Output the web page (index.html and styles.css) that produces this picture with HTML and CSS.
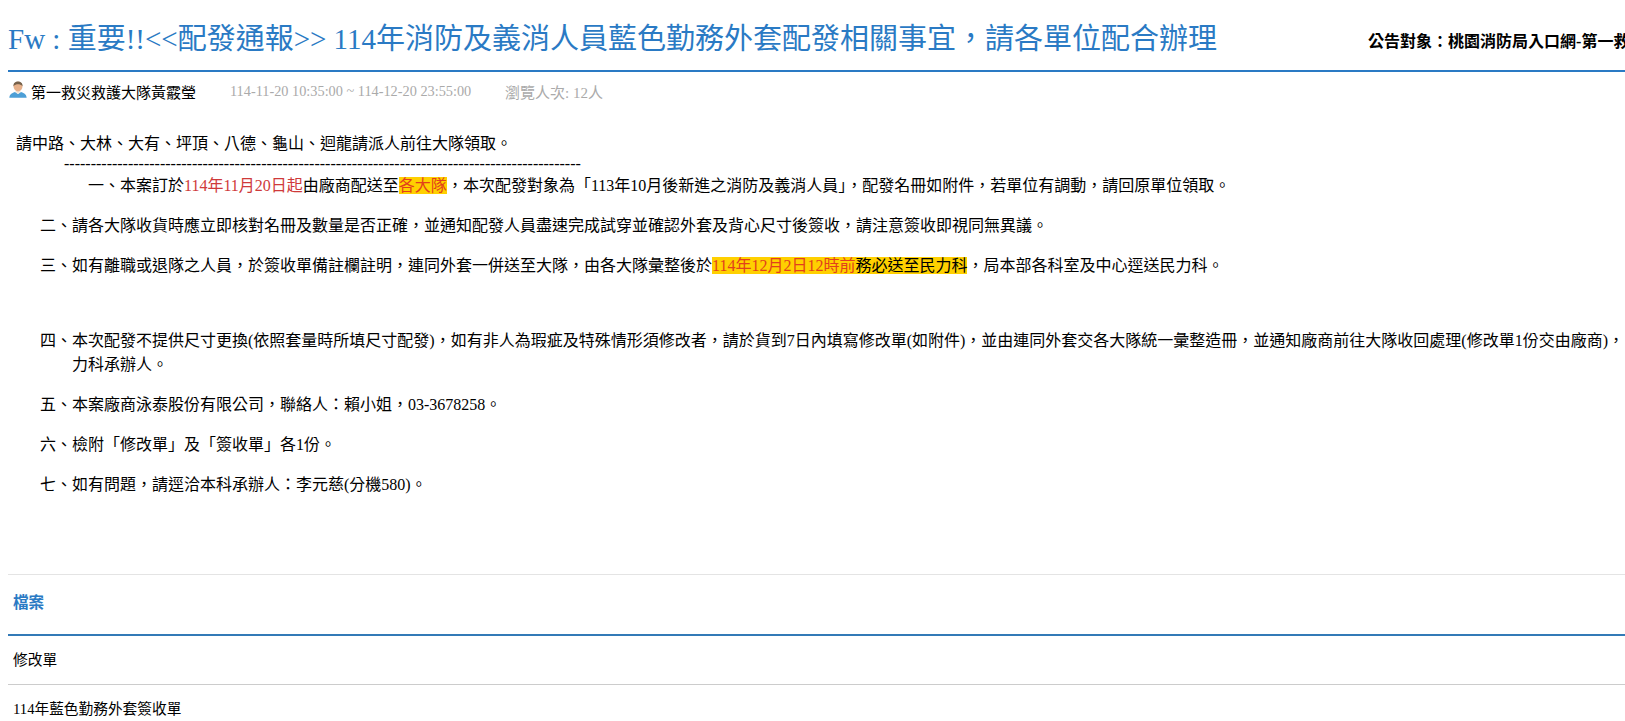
FILE: index.html
```html
<!DOCTYPE html>
<html lang="zh-Hant">
<head>
<meta charset="utf-8">
<title>公告</title>
<link rel="stylesheet" href="styles.css">
</head>
<body>
<div class="page">
  <header class="head">
    <h1 class="title">Fw : 重要!!&lt;&lt;配發通報&gt;&gt; 114年消防及義消人員藍色勤務外套配發相關事宜，請各單位配合辦理</h1>
    <div class="audience">公告對象：桃園消防局入口網-第一救災救護大隊</div>
  </header>
  <div class="meta">
    <svg class="avatar" viewBox="0 0 17 16" width="18" height="17" aria-hidden="true">
      <path d="M0.3 15.7C0.6 12.4 3.2 11 5.8 10.4L8.5 12.2L11.2 10.4C13.8 11 16.4 12.4 16.7 15.7Z" fill="#4d9fd6"/>
      <path d="M5.8 10.4L8.5 12.2L11.2 10.4L10 9H7Z" fill="#f0e6da"/>
      <ellipse cx="8.5" cy="5.2" rx="4.2" ry="4.6" fill="#e6b08a"/>
      <path d="M4.2 5C4 1.8 6 0.4 8.5 0.4C11 0.4 13 1.8 12.8 5C11.6 3.4 10 3 8.5 3C7 3 5.4 3.4 4.2 5Z" fill="#75604a"/>
    </svg>
    <span class="author">第一救災救護大隊黃霰瑩</span>
    <span class="dates">114-11-20 10:35:00 ~ 114-12-20 23:55:00</span>
    <span class="views">瀏覽人次: 12人</span>
  </div>
  <article class="body">
    <p class="lead">請中路、大林、大有、坪頂、八德、龜山、迴龍請派人前往大隊領取。</p>
    <p class="dash">-------------------------------------------------------------------------------------------------</p>
    <p class="first">一、本案訂於<span class="red">114年11月20日起</span>由廠商配送至<span class="mark hot">各大隊</span>，本次配發對象為「113年10月後新進之消防及義消人員」，配發名冊如附件，若單位有調動，請回原單位領取。</p>
    <p class="item">二、請各大隊收貨時應立即核對名冊及數量是否正確，並通知配發人員盡速完成試穿並確認外套及背心尺寸後簽收，請注意簽收即視同無異議。</p>
    <p class="item gap">三、如有離職或退隊之人員，於簽收單備註欄註明，連同外套一併送至大隊，由各大隊彙整後於<span class="mark hot">114年12月2日12時前</span><span class="mark">務必送至民力科</span>，局本部各科室及中心逕送民力科。</p>
    <p class="item wide">四、本次配發不提供尺寸更換(依照套量時所填尺寸配發)，如有非人為瑕疵及特殊情形須修改者，請於貨到7日內填寫修改單(如附件)，並由連同外套交各大隊統一彙整造冊，並通知廠商前往大隊收回處理(修改單1份交由廠商)，<br>力科承辦人。</p>
    <p class="item">五、本案廠商泳泰股份有限公司，聯絡人：賴小姐，03-3678258。</p>
    <p class="item">六、檢附「修改單」及「簽收單」各1份。</p>
    <p class="item">七、如有問題，請逕洽本科承辦人：李元慈(分機580)。</p>
  </article>
  <section class="files">
    <h2 class="files-title">檔案</h2>
    <div class="file">修改單</div>
    <div class="file">114年藍色勤務外套簽收單</div>
  </section>
</div>
</body>
</html>
```

FILE: styles.css
```css
html, body {
  margin: 0;
  height: 721px;
  overflow: hidden;
  background: #fff;
}
body {
  font-family: "Liberation Serif", "Noto Sans CJK TC", serif;
  font-size: 16px;
  color: #000;
}
.page {
  padding: 0 0 0 8px;
  width: 1800px;
}
.head {
  display: flex;
  align-items: center;
  height: 70px;
  border-bottom: 2px solid #2a7ac4;
  white-space: nowrap;
}
.title {
  margin: 0;
  font-size: 29px;
  font-weight: 400;
  color: #2a7ac4;
  padding-top: 1px;
}
.audience {
  margin-left: 151px;
  font-weight: 700;
  padding-top: 10px;
}
.meta {
  display: flex;
  align-items: center;
  height: 38px;
  font-size: 15px;
}
.avatar {
  margin: -3px 4px 0 1px;
  flex: none;
}
.author {
  width: 199px;
}
.dates, .views {
  color: #aaa;
}
.dates {
  width: 275px;
  font-size: 14.3px;
}
.body {
  padding: 23px 0 0 8px;
  line-height: 22px;
}
.body p {
  margin: 0;
  white-space: nowrap;
}
.lead {
  height: 20px;
}
.dash {
  padding-left: 48px;
  height: 22px;
}
.first {
  padding-left: 72px;
  margin-bottom: 18px !important;
}
.item {
  padding-left: 24px;
  margin-bottom: 18px !important;
}
.item.gap {
  margin-bottom: 52px !important;
}
.item.wide {
  text-indent: -32px;
  padding-left: 56px;
  line-height: 24px;
  margin-bottom: 17px !important;
}
.red {
  color: #cf3a3a;
}
.hot {
  color: #e2401c;
}
.mark {
  background: #ffd000;
}
.files {
  margin-top: 78px;
  border-top: 1px solid #e4e4e4;
}
.files-title {
  margin: 0;
  padding: 0 5px 3px;
  height: 56px;
  line-height: 56px;
  font-size: 15.5px;
  font-weight: 700;
  color: #2a7ac4;
  border-bottom: 2px solid #337ab7;
}
.file {
  padding: 0 5px;
  height: 48px;
  line-height: 48px;
  border-bottom: 1px solid #ccc;
  font-size: 14.7px;
}
.file:last-child {
  border-bottom: 0;
}
```
